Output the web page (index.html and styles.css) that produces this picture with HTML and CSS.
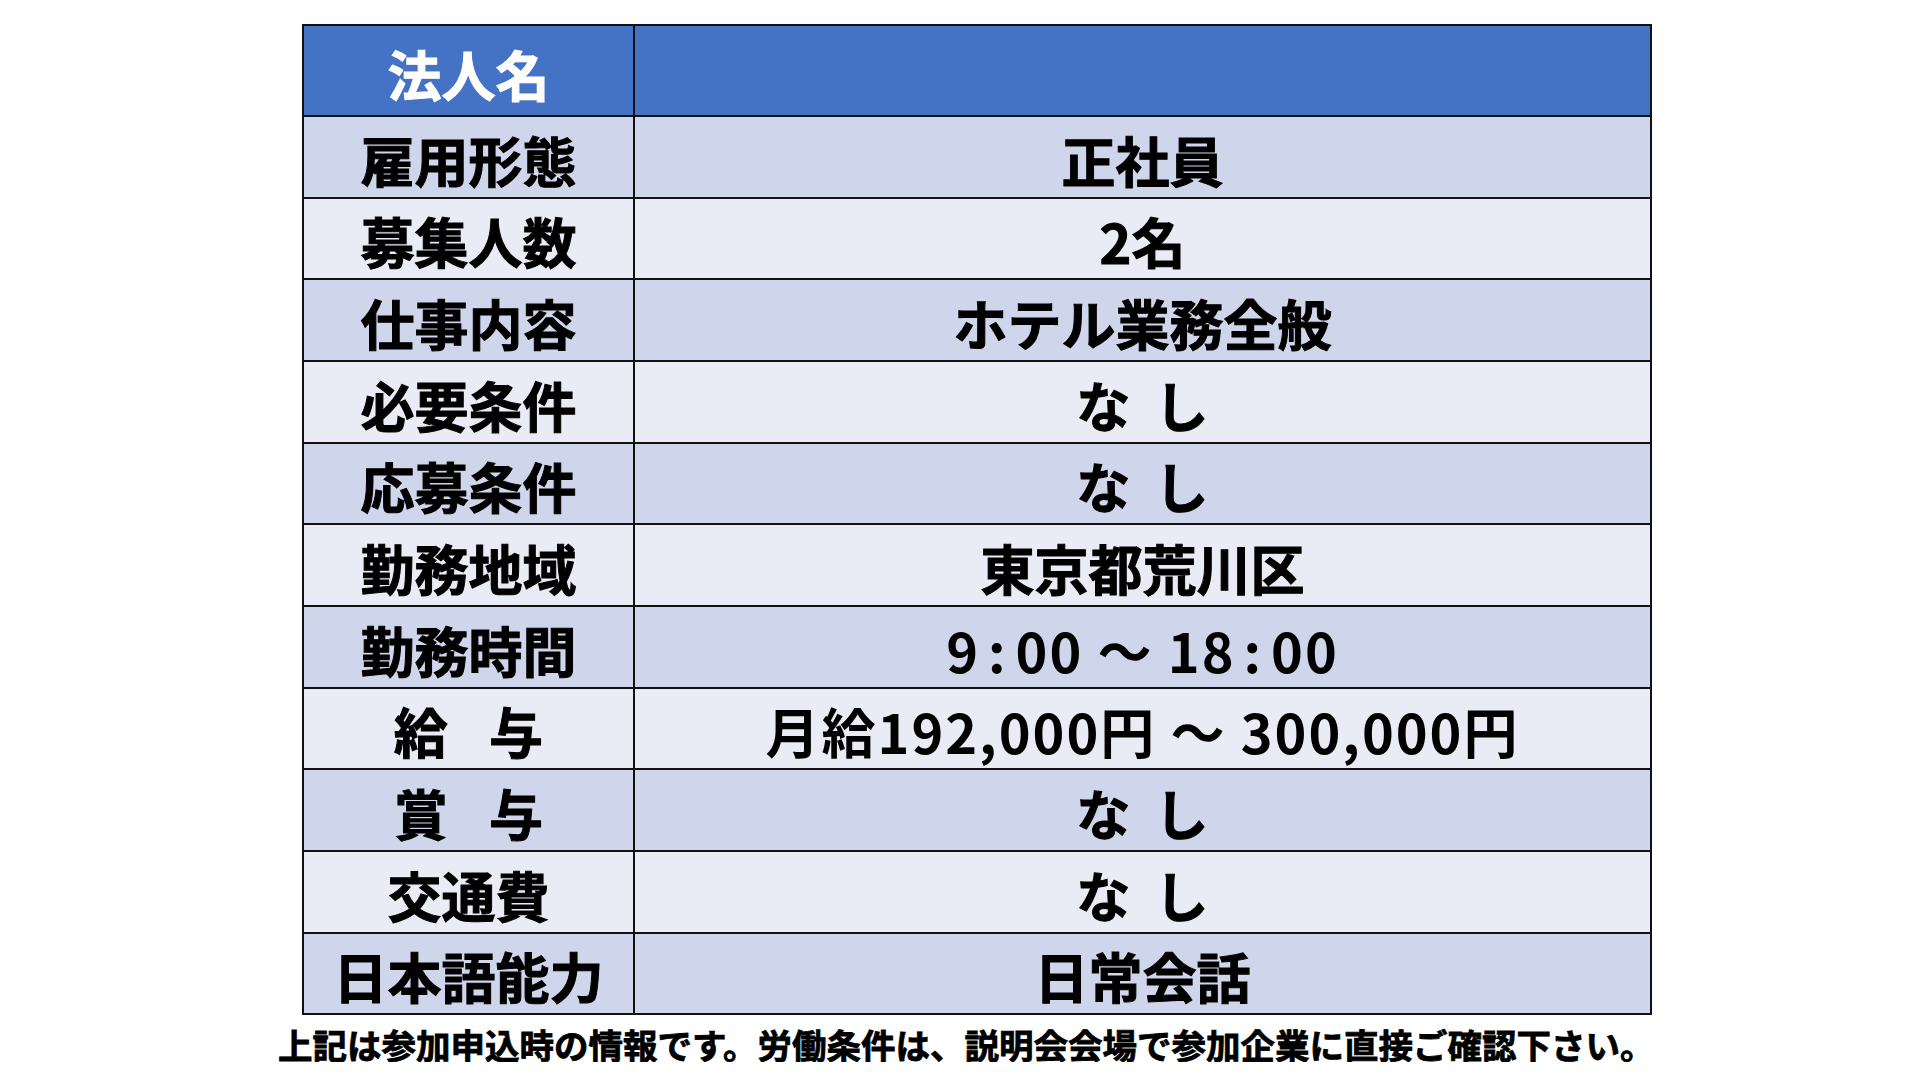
FILE: index.html
```html
<!DOCTYPE html>
<html lang="ja">
<head>
<meta charset="utf-8">
<title>募集要項</title>
<link rel="stylesheet" href="styles.css">
</head>
<body>
<div class="page">
  <div class="sheet">
    <div class="cell head">法人名</div>
    <div class="cell head"></div>

    <div class="cell odd">雇用形態</div>
    <div class="cell odd">正社員</div>

    <div class="cell even">募集人数</div>
    <div class="cell even">2名</div>

    <div class="cell odd">仕事内容</div>
    <div class="cell odd">ホテル業務全般</div>

    <div class="cell even">必要条件</div>
    <div class="cell even nashi">な し</div>

    <div class="cell odd">応募条件</div>
    <div class="cell odd nashi">な し</div>

    <div class="cell even">勤務地域</div>
    <div class="cell even">東京都荒川区</div>

    <div class="cell odd">勤務時間</div>
    <div class="cell odd num">9<span class="colon">:</span>00 ～ 18<span class="colon">:</span>00</div>

    <div class="cell even wide">給 与</div>
    <div class="cell even num">月給192,000円 ～ 300,000円</div>

    <div class="cell odd wide">賞 与</div>
    <div class="cell odd nashi">な し</div>

    <div class="cell even">交通費</div>
    <div class="cell even nashi">な し</div>

    <div class="cell odd">日本語能力</div>
    <div class="cell odd">日常会話</div>
  </div>
  <p class="note">上記は参加申込時の情報です。労働条件は、説明会会場で参加企業に直接ご確認下さい。</p>
</div>
</body>
</html>
```

FILE: styles.css
```css
html, body {
  margin: 0;
  padding: 0;
  background: #ffffff;
}

body {
  font-family: "Noto Sans CJK JP", "Noto Sans", sans-serif;
  color: #000000;
}

.page {
  padding: 24px 0 0 302px;
}

.sheet {
  width: 1350px;
  box-sizing: border-box;
  display: grid;
  grid-template-columns: 331px 1fr;
  grid-template-rows: 91px repeat(11, 81.67px);
  border-top: 2px solid #111111;
  border-left: 2px solid #111111;
}

.cell {
  box-sizing: border-box;
  border-right: 2px solid #111111;
  border-bottom: 2px solid #111111;
  display: flex;
  align-items: center;
  justify-content: center;
  font-size: 54px;
  font-weight: 700;
  line-height: 1;
  padding-top: 6px;
  white-space: pre;
  -webkit-text-stroke: 1px currentColor;
}

.head {
  background: #4472c4;
  color: #ffffff;
}

.odd {
  background: #cfd5ea;
}

.even {
  background: #e9ebf5;
}

.num {
  letter-spacing: 2px;
  -webkit-text-stroke: 0;
}

.colon {
  margin: 0 8px;
}

.nashi {
  word-spacing: 12px;
}

.wide {
  word-spacing: 29px;
}

.note {
  margin: 12px 0 0 -24px;
  font-size: 34.5px;
  font-weight: 700;
  line-height: 1;
  white-space: nowrap;
  -webkit-text-stroke: 0.8px currentColor;
}
```
